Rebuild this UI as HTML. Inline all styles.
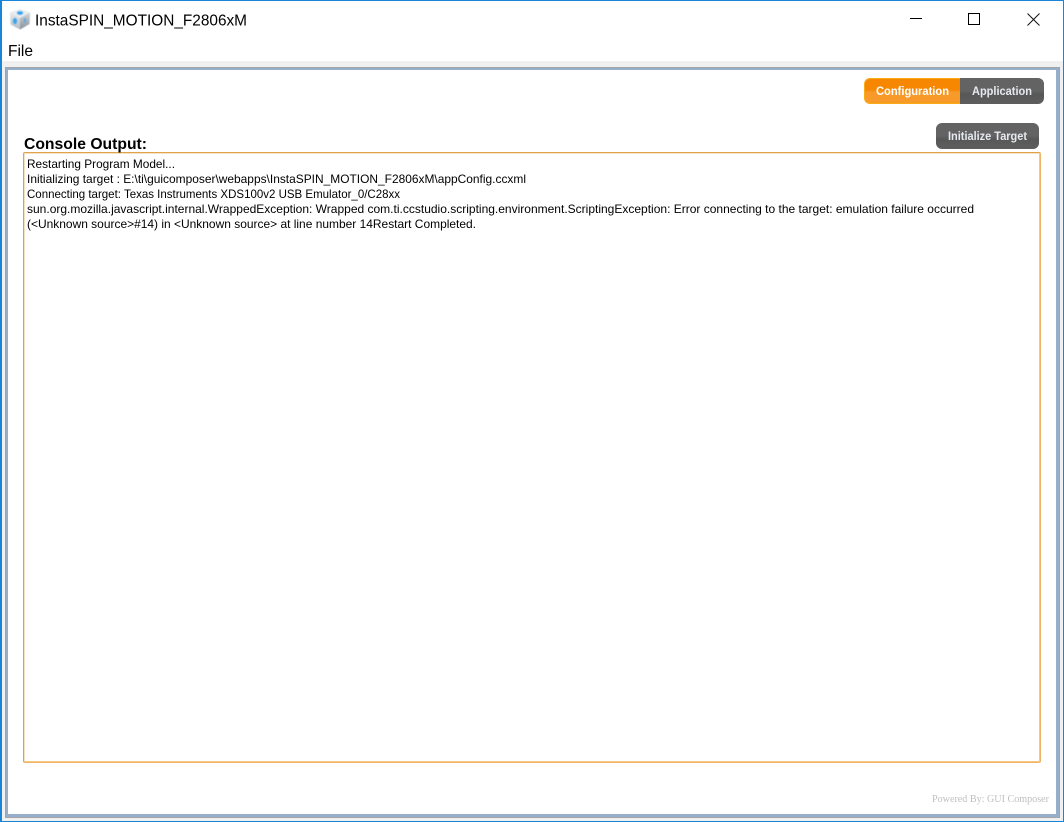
<!DOCTYPE html>
<html>
<head>
<meta charset="utf-8">
<style>
html,body{margin:0;padding:0;width:1064px;height:822px;overflow:hidden;background:#fff;}
.a{position:absolute;box-sizing:border-box;}
svg{position:absolute;left:0;top:0;}
text{font-family:"Liberation Sans",sans-serif;}
</style>
</head>
<body>
<div class="a" style="left:0;top:0;width:1064px;height:822px;background:#fff;"></div>
<div class="a" style="left:1px;top:61px;width:1062px;height:760px;background:#f0f0f0;"></div>
<div class="a" style="left:5px;top:67px;width:1055px;height:751px;background:#fff;border:1px solid #a2a5a8;"></div>
<div class="a" style="left:6px;top:68px;width:1053px;height:749px;background:#fff;border:2px solid #96aec9;border-right-width:3px;border-bottom-width:3px;"></div>
<div class="a" style="left:0;top:0;width:1064px;height:822px;border:1px solid #1a84d8;border-left-width:2px;"></div>

<div class="a" style="left:864px;top:78px;width:96px;height:26px;border-radius:6px 0 0 6px;background:linear-gradient(#f78600,#f78600 45%,#f89a2a 55%,#f89a2a);border:1px solid #fbab14;border-right:0;"></div>
<div class="a" style="left:960px;top:78px;width:84px;height:26px;border-radius:0 6px 6px 0;background:linear-gradient(#636363,#636363 50%,#575757 62%,#5e5e5e);"></div>
<div class="a" style="left:936px;top:123px;width:103px;height:26px;border-radius:6px;background:linear-gradient(#636363,#636363 50%,#575757 62%,#5e5e5e);"></div>
<div class="a" style="left:23px;top:152px;width:1018px;height:611px;background:#fff;border:1px solid #e0a34a;border-right-color:#efb564;border-bottom-color:#efb564;border-radius:2px;box-shadow:inset -1px -1px 0 #f5c888,inset 1px 1px 0 #f4e2c4;"></div>

<svg width="1064" height="822" viewBox="0 0 1064 822" xmlns="http://www.w3.org/2000/svg">
  <defs>
    <linearGradient id="l" x1="0" y1="0" x2="0" y2="1"><stop offset="0" stop-color="#f2f4f6"/><stop offset="1" stop-color="#b4bcc3"/></linearGradient>
    <linearGradient id="r" x1="0" y1="0" x2="0" y2="1"><stop offset="0" stop-color="#d2d7db"/><stop offset="1" stop-color="#87929b"/></linearGradient>
    <filter id="soft" x="-20%" y="-20%" width="140%" height="140%"><feGaussianBlur stdDeviation="0.55"/></filter>
  </defs>
  <!-- app icon cube -->
  <g filter="url(#soft)">
    <path d="M20 9 L30 12.5 L29.5 24 L20 29.5 L10.5 24.5 L10 12.5 Z" fill="url(#l)"/>
    <path d="M20 18 L30 12.5 L29.5 24 L20 29.5 Z" fill="url(#r)"/>
    <path d="M20 9 L30 12.5 L20 18 L10 12.5 Z" fill="#e8ecef"/>
    <ellipse cx="20" cy="13" rx="3.2" ry="2" fill="#35a7ec"/>
    <ellipse cx="15" cy="21" rx="2.2" ry="3.2" fill="#35a7ec"/>
    <ellipse cx="25" cy="20.5" rx="1.5" ry="2.4" fill="#6fa9cf"/>
  </g>

  <!-- window controls -->
  <path d="M910 18.5 H922" stroke="#000" stroke-width="1" fill="none"/>
  <rect x="968.5" y="13.5" width="11" height="11" stroke="#000" stroke-width="1" fill="none"/>
  <path d="M1027.5 13.5 L1039.5 25.5 M1039.5 13.5 L1027.5 25.5" stroke="#111" stroke-width="1" fill="none"/>

  <!-- title & menu -->
  <text x="35" y="25.5" font-size="16" fill="#000" textLength="212" lengthAdjust="spacingAndGlyphs">InstaSPIN_MOTION_F2806xM</text>
  <text x="8" y="56" font-size="16" fill="#000" textLength="25" lengthAdjust="spacingAndGlyphs">File</text>

  <!-- buttons -->
  <text x="876" y="95" font-size="11.5" font-weight="bold" fill="#fff" textLength="73" lengthAdjust="spacingAndGlyphs">Configuration</text>
  <text x="972" y="95" font-size="11.5" font-weight="bold" fill="#e6e9ee" textLength="60" lengthAdjust="spacingAndGlyphs">Application</text>
  <text x="948" y="140" font-size="11.5" font-weight="bold" fill="#e6e9ee" textLength="79" lengthAdjust="spacingAndGlyphs">Initialize Target</text>

  <!-- console -->
  <text x="24" y="149" font-size="16" font-weight="bold" fill="#000" textLength="123" lengthAdjust="spacingAndGlyphs">Console Output:</text>
  <g font-size="12" fill="#000">
    <text x="27" y="168" textLength="148" lengthAdjust="spacingAndGlyphs">Restarting Program Model...</text>
    <text x="27" y="183" textLength="499" lengthAdjust="spacingAndGlyphs">Initializing target : E:\ti\guicomposer\webapps\InstaSPIN_MOTION_F2806xM\appConfig.ccxml</text>
    <text x="27" y="198" textLength="373" lengthAdjust="spacingAndGlyphs">Connecting target: Texas Instruments XDS100v2 USB Emulator_0/C28xx</text>
    <text x="27" y="213" textLength="947" lengthAdjust="spacingAndGlyphs">sun.org.mozilla.javascript.internal.WrappedException: Wrapped com.ti.ccstudio.scripting.environment.ScriptingException: Error connecting to the target: emulation failure occurred</text>
    <text x="27" y="228" textLength="449" lengthAdjust="spacingAndGlyphs">(&lt;Unknown source&gt;#14) in &lt;Unknown source&gt; at line number 14Restart Completed.</text>
  </g>

  <!-- footer -->
  <text x="932" y="802" font-size="10" fill="#bfbfbf" style="font-family:'Liberation Serif',serif" textLength="117" lengthAdjust="spacingAndGlyphs">Powered By: GUI Composer</text>
</svg>
</body>
</html>
